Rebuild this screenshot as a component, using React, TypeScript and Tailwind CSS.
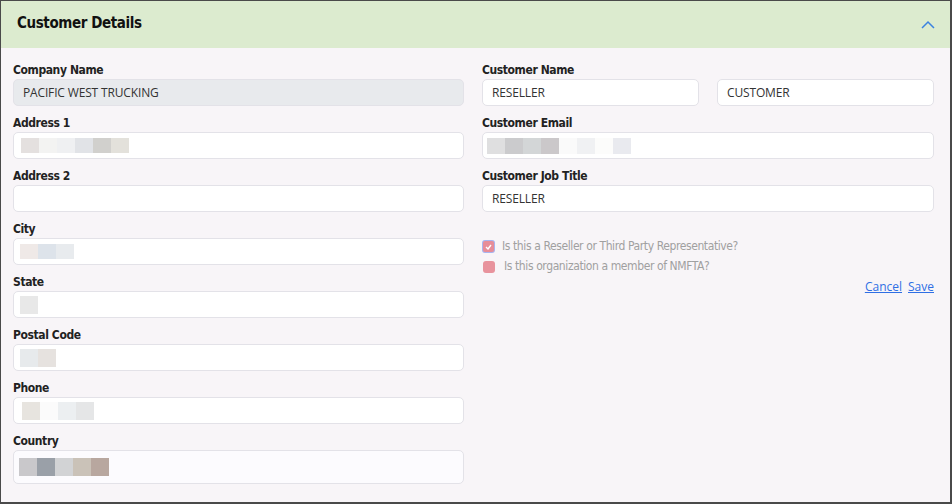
import React from 'react'

const label = "block h-[13px] text-[12px] font-bold text-[#222] leading-[13px] mb-[2px] tracking-[-0.4px] font-stretch-condensed"
const labelFont = { fontFamily: '"DejaVu Sans", sans-serif' }

const Blur: React.FC<{ colors: string[]; h?: string }> = ({ colors, h = 'h-[16px]' }) => (
  <div className="flex">
    {colors.map((c, i) => (
      <span key={i} className={`w-[18px] ${h}`} style={{ backgroundColor: c }} />
    ))}
  </div>
)

const inputBox = "rounded-[5px] border border-[#e3e2e8] flex items-center px-[6px] text-[12px] tracking-[-0.15px] text-[#333] font-['Open_Sans',sans-serif]"

const Field: React.FC<{ title: string; children?: React.ReactNode; className?: string }> = ({
  title,
  children,
  className = 'h-[27px] bg-white',
}) => (
  <div>
    <span className={label} style={labelFont}>
      {title}
    </span>
    <div className={`${className} ${inputBox}`}>{children}</div>
  </div>
)

const App: React.FC = () => {
  return (
    <div className="w-[952px] h-[504px] border border-r-2 border-b-2 border-[#4a4a4a] bg-[#f8f5f8] overflow-hidden">
      {/* Header */}
      <div className="h-[47px] bg-[#dcebcf] flex items-center justify-between pl-[16px] pr-[15px]">
        <h2
          className="text-[15px] font-bold text-[#111] mt-[-3px] tracking-[-0.4px] font-stretch-condensed"
          style={labelFont}
        >
          Customer Details
        </h2>
        <svg width="14" height="9" viewBox="0 0 14 9" className="mt-[-1px]">
          <path d="M1 8 L7 2 L13 8" fill="none" stroke="#3b82e0" strokeWidth="1.5" />
        </svg>
      </div>

      {/* Body */}
      <div className="grid grid-cols-[451px_452px] gap-x-[18px] pl-[12px] pt-[16px]">
        <div className="flex flex-col gap-[11px]">
          <Field title="Company Name" className="h-[27px] bg-[#e8eaed]">
            <span className="pl-[3px]">PACIFIC WEST TRUCKING</span>
          </Field>
          <Field title="Address 1">
            <div className="pl-[1px]">
              <Blur colors={['#e4e0df', '#f3f3f2', '#eff0f2', '#e1e3e7', '#d1d0cd', '#e3e1db']} h="h-[15px]" />
            </div>
          </Field>
          <Field title="Address 2" />
          <Field title="City">
            <Blur colors={['#efe9e7', '#dde3ea', '#e8ebee']} h="h-[15px]" />
          </Field>
          <Field title="State">
            <Blur colors={['#e8e8e8']} h="h-[18px]" />
          </Field>
          <Field title="Postal Code">
            <Blur colors={['#e7eaec', '#e6e2df']} h="h-[18px]" />
          </Field>
          <Field title="Phone">
            <div className="pl-[2px]">
              <Blur colors={['#e7e4df', '#fbfbfb', '#eceff1', '#e5e6e7']} h="h-[18px]" />
            </div>
          </Field>
          <Field title="Country" className="h-[34px] bg-[#fcfbfe] !pl-[5px]">
            <Blur colors={['#c9c8cb', '#9aa0a8', '#d2d3d5', '#cac2b8', '#b8a79f']} h="h-[18px]" />
          </Field>
        </div>

        <div className="flex flex-col gap-[11px]">
          <div>
            <span className={label} style={labelFont}>
              Customer Name
            </span>
            <div className="grid grid-cols-2 gap-x-[18px]">
              <div className={`h-[27px] bg-white ${inputBox} !px-[9px]`}>RESELLER</div>
              <div className={`h-[27px] bg-white ${inputBox} !px-[9px]`}>CUSTOMER</div>
            </div>
          </div>
          <Field title="Customer Email">
            <div className="ml-[-2px]">
              <Blur colors={['#dfdfe0', '#cbcbcd', '#d3d6d7', '#cbc8ca', '#fafafa', '#f0f1f3', '#fcfcfb', '#e9eaef']} />
            </div>
          </Field>
          <Field title="Customer Job Title">
            <span className="pl-[3px]">RESELLER</span>
          </Field>

          <div
            className="mt-[16px] flex flex-col gap-[5px] text-[12px] leading-[15px] text-[#a0a0a0] tracking-[-0.4px] font-stretch-condensed"
            style={labelFont}
          >
            <label className="flex items-center gap-[8px]">
              <span className="w-[11px] h-[11px] ml-[1px] rounded-[2px] bg-[#e78d99] ring-1 ring-[#a8b4f0] flex items-center justify-center">
                <svg width="7" height="6" viewBox="0 0 7 6">
                  <path d="M1 3 L3 5 L6 1" fill="none" stroke="#fff" strokeWidth="1.4" />
                </svg>
              </span>
              Is this a Reseller or Third Party Representative?
            </label>
            <label className="flex items-center gap-[9px]">
              <span className="w-[12px] h-[12px] ml-[1px] rounded-[3px] bg-[#e8939d]" />
              Is this organization a member of NMFTA?
            </label>
          </div>

          <div className="flex justify-end gap-[6px] text-[12px] text-[#2f6fe4] underline font-['Open_Sans',sans-serif] mt-[-7px]">
            <a href="#">Cancel</a>
            <a href="#">Save</a>
          </div>
        </div>
      </div>
    </div>
  )
}

export default App
